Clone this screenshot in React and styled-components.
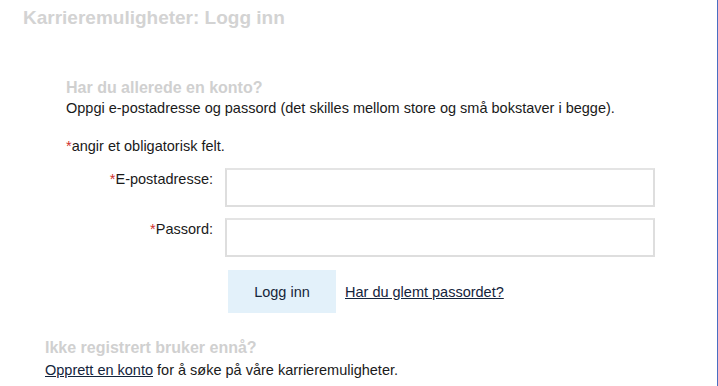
import React from 'react';
import styled, { createGlobalStyle } from 'styled-components';

const GlobalStyle = createGlobalStyle`
	html, body {
		margin: 0;
		padding: 0;
		background: #ffffff;
	}
	body {
		font-family: "Liberation Sans", Arial, sans-serif;
		font-size: 14.5px;
		color: #1a1a1a;
	}
`;

const Page = styled.div`
	box-sizing: border-box;
	width: 718px;
	height: 386px;
	border-right: 1px solid #4a6fc2;
	overflow: hidden;
`;

const Title = styled.h1`
	margin: 0;
	padding: 6px 0 0 23px;
	height: 28px;
	font-size: 19px;
	line-height: 24px;
	font-weight: bold;
	color: #d3d3d3;
`;

const Section = styled.section`
	padding-left: ${(p) => p.$indent}px;
	margin-top: ${(p) => p.$top}px;
`;

const Heading = styled.h2`
	margin: 0;
	font-size: 16px;
	line-height: 20px;
	font-weight: bold;
	color: #d0d0d0;
`;

const Text = styled.p`
	margin: 0;
	line-height: 20px;
	margin-top: ${(p) => p.$top || 0}px;
`;

const Required = styled.span`
	color: #d0312d;
`;

const Form = styled.form`
	display: grid;
	grid-template-columns: 147px 430px;
	column-gap: 12px;
	row-gap: 11px;
	margin-top: 12px;
`;

const Label = styled.label`
	text-align: right;
	line-height: 20px;
	padding-top: 1px;
`;

const Input = styled.input`
	box-sizing: border-box;
	width: 430px;
	height: 39px;
	border: 2px solid #dedede;
	border-top-color: #e4e4e4;
	background: #ffffff;
	outline: none;
`;

const Actions = styled.div`
	grid-column: 2;
	display: flex;
	align-items: center;
	gap: 9px;
	margin-top: 2px;
	padding-left: 3px;
`;

const Button = styled.button`
	width: 108px;
	height: 43px;
	border: none;
	background: #e3f1fa;
	font-family: inherit;
	font-size: 14.5px;
	color: #16263a;
	padding: 0;
	cursor: pointer;
`;

const Link = styled.a`
	color: #14243c;
	text-decoration: underline;
	cursor: pointer;
`;

export default function App() {
	return (
		<>
			<GlobalStyle />
			<Page>
				<Title>Karrieremuligheter: Logg inn</Title>
				<Section $indent={66} $top={44}>
					<Heading>Har du allerede en konto?</Heading>
					<Text>Oppgi e-postadresse og passord (det skilles mellom store og små bokstaver i begge).</Text>
					<Text $top={18}><Required>*</Required>angir et obligatorisk felt.</Text>
					<Form onSubmit={(e) => e.preventDefault()}>
						<Label htmlFor="email"><Required>*</Required>E-postadresse:</Label>
						<Input id="email" type="text" />
						<Label htmlFor="password"><Required>*</Required>Passord:</Label>
						<Input id="password" type="password" />
						<Actions>
							<Button type="submit">Logg inn</Button>
							<Link>Har du glemt passordet?</Link>
						</Actions>
					</Form>
				</Section>
				<Section $indent={45} $top={25}>
					<Heading>Ikke registrert bruker ennå?</Heading>
					<Text $top={2}><Link>Opprett en konto</Link> for å søke på våre karrieremuligheter.</Text>
				</Section>
			</Page>
		</>
	);
}
